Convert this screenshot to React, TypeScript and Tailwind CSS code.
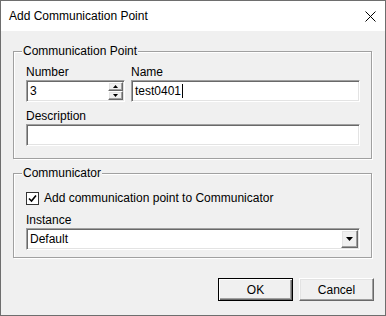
import React, { useState } from "react";

const sunken =
  "border border-t-[#a0a0a0] border-l-[#a0a0a0] border-b-white border-r-white shadow-[inset_1px_1px_0_#696969,inset_-1px_-1px_0_#e3e3e3]";
const raised =
  "border border-t-white border-l-white border-b-[#696969] border-r-[#696969] shadow-[inset_-1px_-1px_0_#a0a0a0,inset_1px_1px_0_#e3e3e3]";

const GroupBox = ({
  title,
  className,
  children,
}: {
  title: string;
  className: string;
  children: React.ReactNode;
}) => (
  <div
    className={`relative border border-[#a0a0a0] shadow-[inset_1px_1px_0_#ffffff,1px_1px_0_#ffffff] ${className}`}
  >
    <span className="absolute -top-[9px] left-[8px] bg-[#f0f0f0] px-[1px] leading-[16px]">
      {title}
    </span>
    {children}
  </div>
);

const Label = ({ text, className = "" }: { text: string; className?: string }) => (
  <div className={`leading-[16px] ${className}`}>{text}</div>
);

const Triangle = ({ up }: { up?: boolean }) => (
  <svg width="5" height="3" viewBox="0 0 5 3" className="block">
    {up ? <path d="M2.5 0 L5 3 L0 3 Z" fill="#000" /> : <path d="M0 0 L5 0 L2.5 3 Z" fill="#000" />}
  </svg>
);

const App = () => {
  const [checked, setChecked] = useState(true);

  return (
    <div
      className="flex h-[316px] w-[386px] flex-col border border-[#6e6e6e] text-[12px] text-black"
      style={{ fontFamily: '"Liberation Sans", Arial, sans-serif' }}
    >
      <div className="flex h-[30px] items-center justify-between bg-white pl-[8px] pr-[9px]">
        <span className="text-[12px]">Add Communication Point</span>
        <svg width="11" height="11" viewBox="0 0 11 11">
          <path d="M0.5 0.5 L10.5 10.5 M10.5 0.5 L0.5 10.5" stroke="#000" strokeWidth="1" />
        </svg>
      </div>

      <div className="flex flex-1 flex-col bg-[#f0f0f0] pt-[20px]">
        <GroupBox title="Communication Point" className="ml-[12px] mr-[13px] pb-[12px] pl-[12px] pr-[11px] pt-[12px]">
          <div className="flex gap-[6px]">
            <div className="flex w-[99px] flex-col">
              <Label text="Number" />
              <div className={`flex h-[22px] items-stretch bg-white ${sunken}`}>
                <div className="flex flex-1 items-center pl-[3px]">3</div>
                <div className="flex w-[16px] flex-col py-[1px] pr-[1px]">
                  <div className={`flex flex-1 items-center justify-center bg-[#f0f0f0] ${raised}`}>
                    <Triangle up />
                  </div>
                  <div className={`flex flex-1 items-center justify-center bg-[#f0f0f0] ${raised}`}>
                    <Triangle />
                  </div>
                </div>
              </div>
            </div>
            <div className="flex flex-1 flex-col">
              <Label text="Name" />
              <div className={`flex h-[22px] items-center bg-white pl-[3px] ${sunken}`}>
                <span>test0401</span>
                <span className="ml-[1px] h-[14px] w-[1px] bg-black" />
              </div>
            </div>
          </div>
          <Label text="Description" className="mt-[6px]" />
          <div className={`h-[22px] bg-white ${sunken}`} />
        </GroupBox>

        <GroupBox title="Communicator" className="ml-[12px] mr-[13px] mt-[14px] pb-[7px] pl-[12px] pr-[11px] pt-[16px]">
          <label className="flex h-[16px] cursor-default items-center gap-[5px]">
            <span
              onClick={() => setChecked(!checked)}
              className="flex h-[13px] w-[13px] items-center justify-center border border-[#333333] bg-white"
            >
              {checked && (
                <svg width="9" height="9" viewBox="0 0 9 9">
                  <path d="M1 4.5 L3.5 7 L8 1.5" fill="none" stroke="#000" strokeWidth="1.6" />
                </svg>
              )}
            </span>
            <span>Add communication point to Communicator</span>
          </label>
          <Label text="Instance" className="mt-[6px]" />
          <div className={`flex h-[22px] items-center bg-white pl-[3px] ${sunken}`}>
            <span className="flex-1">Default</span>
            <div className={`mr-[1px] flex h-[18px] w-[17px] items-center justify-center bg-[#f0f0f0] ${raised}`}>
              <svg width="7" height="4" viewBox="0 0 7 4">
                <path d="M0 0 L7 0 L3.5 4 Z" fill="#000" />
              </svg>
            </div>
          </div>
        </GroupBox>

        <div className="mr-[11px] mt-[20px] flex justify-end gap-[6px]">
          <button className="flex h-[23px] w-[75px] items-center justify-center border border-black bg-[#f0f0f0] shadow-[inset_1px_1px_0_#ffffff,inset_-1px_-1px_0_#696969,inset_-2px_-2px_0_#a0a0a0]">
            OK
          </button>
          <button className={`flex h-[23px] w-[75px] items-center justify-center bg-[#f0f0f0] ${raised}`}>
            Cancel
          </button>
        </div>
      </div>
    </div>
  );
};

export default App;
